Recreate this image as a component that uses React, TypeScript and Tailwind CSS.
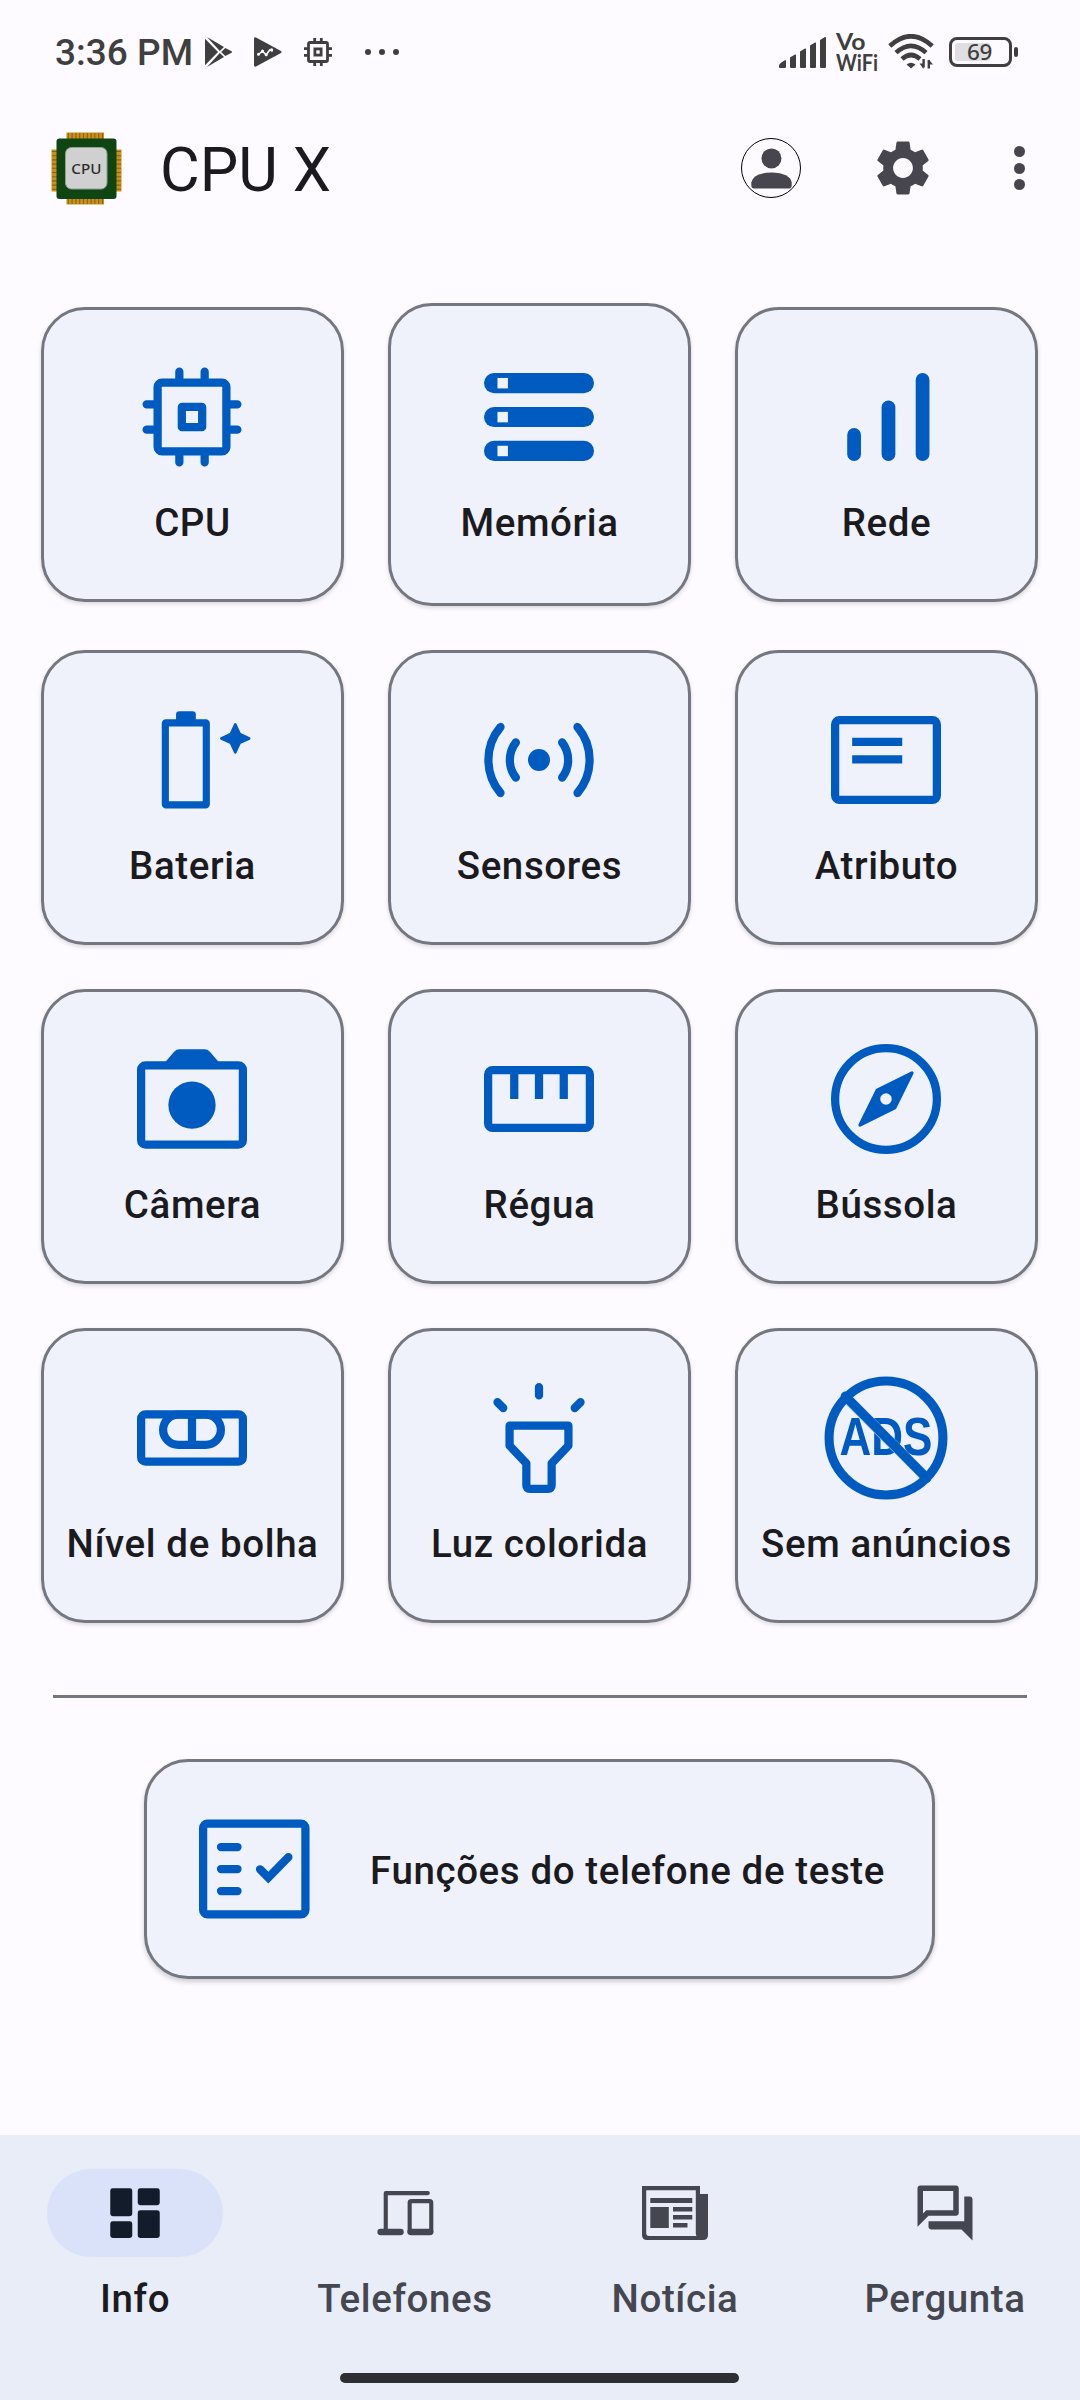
import type { ReactNode } from "react";
import { MdOutlineForum, MdSettings } from "react-icons/md";

function TileIcon({ children }: { children: ReactNode }) {
  return (
    <svg
      viewBox="0 0 24 24"
      className="size-[132px] shrink-0 overflow-visible text-[#005bc0]"
      fill="none"
      stroke="currentColor"
      strokeWidth={1.5}
      strokeLinecap="round"
      strokeLinejoin="round"
    >
      {children}
    </svg>
  );
}

const CpuIcon = () => (
  <TileIcon>
    <rect x="5.75" y="5.75" width="12.5" height="12.5" rx="0.8" />
    <rect x="10.15" y="10.15" width="3.7" height="3.7" rx="0.05" />
    <path d="M9.7 5V3.75M14.3 5V3.75M9.7 19v1.25M14.3 19v1.25M5 9.7H3.75M5 14.3H3.75M19 9.7h1.25M19 14.3h1.25" />
  </TileIcon>
);

const StorageIcon = () => (
  <TileIcon>
    {[4, 10.17, 16.33].map((y) => (
      <g key={y} stroke="none">
        <rect x="2" y={y} width="20" height="3.67" rx="1.83" fill="currentColor" />
        <rect x="4.45" y={y + 0.9} width="1.9" height="1.9" fill="#eff2fb" />
      </g>
    ))}
  </TileIcon>
);

const NetworkIcon = () => (
  <TileIcon>
    <g fill="currentColor" stroke="none">
      <rect x="4.95" y="14" width="2.5" height="6" rx="1.25" />
      <rect x="11.2" y="9" width="2.5" height="11" rx="1.25" />
      <rect x="17.4" y="4" width="2.5" height="16" rx="1.25" />
    </g>
  </TileIcon>
);

const BatteryIcon = () => (
  <TileIcon>
    <rect x="7.15" y="5.25" width="7.45" height="14.9" rx="0.1" strokeWidth={1.3} />
    <path d="M9.1 5V3.75q0-.6.6-.6h2.4q.6 0 .6.6V5z" fill="currentColor" stroke="none" />
    <path
      d="M19.87 5.55l.8 1.72 1.72.8-1.72.8-.8 1.72-.8-1.72-1.72-.8 1.72-.8z"
      fill="currentColor"
      strokeWidth={0.5}
    />
  </TileIcon>
);

const SensorsIcon = () => (
  <TileIcon>
    <circle cx="12" cy="12" r="2" fill="currentColor" stroke="none" />
    <path d="M5 6a9.28 9.28 0 0 0 0 12M7.8 8.8a5.2 5.2 0 0 0 0 6.4M19 6a9.28 9.28 0 0 1 0 12M16.2 8.8a5.2 5.2 0 0 1 0 6.4" />
  </TileIcon>
);

const AttributeIcon = () => (
  <TileIcon>
    <rect x="2.75" y="4.75" width="18.5" height="14.5" rx="0.8" />
    <path d="M5.85 8.7h9.1M5.85 11.9h9.1" strokeLinecap="butt" />
  </TileIcon>
);

const CameraIcon = () => (
  <TileIcon>
    <rect x="2.75" y="5.9" width="18.5" height="14.4" rx="0.8" />
    <path d="M7.15 5.25l1.6-1.85q.4-.45 1-.45h4.5q.6 0 1 .45l1.6 1.85z" fill="currentColor" stroke="none" />
    <circle cx="12" cy="13.1" r="4.3" fill="currentColor" stroke="none" />
  </TileIcon>
);

const RulerIcon = () => (
  <TileIcon>
    <rect x="2.75" y="6.75" width="18.5" height="10.5" rx="0.8" />
    <path d="M7.5 7v5M12 7v5M16.5 7v5" strokeLinecap="butt" />
  </TileIcon>
);

const CompassIcon = () => (
  <TileIcon>
    <circle cx="12" cy="12" r="9.25" />
    <path d="M16.72 7.28L13.6 13.6 7.28 16.72 10.4 10.4z" fill="currentColor" strokeWidth={0.6} />
    <circle cx="12" cy="12" r="1.05" fill="#eff2fb" stroke="none" />
  </TileIcon>
);

const BubbleLevelIcon = () => (
  <TileIcon>
    <rect x="2.75" y="7.7" width="18.5" height="8.6" rx="0.8" />
    <rect x="6.75" y="7.75" width="10.5" height="5.5" rx="2.75" />
    <path d="M12 8v5" strokeLinecap="butt" />
  </TileIcon>
);

const FlashlightIcon = () => (
  <TileIcon>
    <path d="M12 2.75v1.5M4.45 5.5l1.05 1.05M19.55 5.5L18.5 6.55M6.65 9.75h10.7v3.65L14.3 16.6v4Q14.3 21.25 13.65 21.25H10.35Q9.7 21.25 9.7 20.6V16.6L6.65 13.4z" />
  </TileIcon>
);

const NoAdsIcon = () => (
  <TileIcon>
    <text
      x="3.55"
      y="15.05"
      fill="currentColor"
      stroke="none"
      fontFamily="Liberation Sans"
      fontWeight="700"
      fontSize="9.9"
      textLength="16.9"
      lengthAdjust="spacingAndGlyphs"
    >
      ADS
    </text>
    <path d="M5 4.9l14.2 14.2" stroke="#a9c8ee" strokeWidth={1.85} strokeLinecap="butt" />
    <path d="M4.6 4.4l14.8 14.9" strokeWidth={1.7} />
    <circle cx="12" cy="12" r="10.35" strokeWidth={1.65} />
  </TileIcon>
);

const ChecklistIcon = () => (
  <TileIcon>
    <rect x="2.75" y="3.75" width="18.6" height="16.5" rx="0.8" />
    <path d="M6 8h3M6 12h3M6 16h3" />
    <path d="M13.1 12.05l1.5 1.5 3.65-3.7" strokeLinejoin="miter" />
  </TileIcon>
);

const tiles: { label: string; icon: ReactNode; tall?: boolean }[] = [
  { label: "CPU", icon: <CpuIcon /> },
  { label: "Memória", icon: <StorageIcon />, tall: true },
  { label: "Rede", icon: <NetworkIcon /> },
  { label: "Bateria", icon: <BatteryIcon /> },
  { label: "Sensores", icon: <SensorsIcon /> },
  { label: "Atributo", icon: <AttributeIcon /> },
  { label: "Câmera", icon: <CameraIcon /> },
  { label: "Régua", icon: <RulerIcon /> },
  { label: "Bússola", icon: <CompassIcon /> },
  { label: "Nível de bolha", icon: <BubbleLevelIcon /> },
  { label: "Luz colorida", icon: <FlashlightIcon /> },
  { label: "Sem anúncios", icon: <NoAdsIcon /> },
];

function Tile({ label, icon, tall }: { label: string; icon: ReactNode; tall?: boolean }) {
  return (
    <button
      className={`flex flex-col items-center gap-3 rounded-[44px] border-3 border-[#747780] bg-[#eff2fb] pr-px shadow-[0_2px_4px_rgba(0,0,0,0.14)] ${
        tall ? "h-[303px] pt-[45px]" : "h-[295px] pt-[41px]"
      }`}
    >
      {icon}
      <span className="pl-px text-[38.5px] leading-[55px] font-medium tracking-[0.6px] whitespace-nowrap">{label}</span>
    </button>
  );
}

function StatusBar() {
  return (
    <div className="flex h-[104px] items-center text-[#3f3f3f]">
      <span className="ml-[55px] w-[150px] pt-0.5 text-[37px] leading-[44px] font-medium whitespace-nowrap">3:36 PM</span>
      <svg width="28" height="30" viewBox="0 0 28 30" fill="currentColor">
        <path d="M0 1.8L13 15 0 28.2zM2 0L19 10l-4.2 4zM14.8 16L19 20 2 30zM20.3 11L26.6 14.2q1 .8 0 1.6L20.3 19 16.2 15z" />
      </svg>
      <svg width="28" height="30" viewBox="0 0 28 30" className="ml-[21px]">
        <path d="M0 1.4Q.2-.3 2 .6L27 14q1 1 0 2L2 29.4Q.2 30.3 0 28.6z" fill="currentColor" />
        <path d="M4.5 17.5l4-3.5 3.6 4 3.6-5 3.2 1" fill="none" stroke="#fdfbff" strokeWidth="1.6" />
        <g fill="#fdfbff">
          <circle cx="4.5" cy="17.3" r="1.5" />
          <circle cx="8.5" cy="14" r="1.5" />
          <circle cx="12.2" cy="17.8" r="1.5" />
          <circle cx="17.6" cy="12.8" r="1.6" />
        </g>
      </svg>
      <svg width="28" height="28" viewBox="0 0 28 28" fill="none" stroke="currentColor" strokeWidth="2.8" className="ml-[22px]">
        <rect x="4.5" y="4.5" width="19" height="19" rx="1.5" />
        <rect x="10.9" y="10.9" width="6.2" height="6.2" />
        <path d="M10.7 4V0M17.3 4V0M10.7 24v4M17.3 24v4M4 10.7H0M4 17.3H0M24 10.7h4M24 17.3h4" />
      </svg>
      <span className="ml-[33px] flex gap-2">
        <i className="size-1.5 rounded-full bg-current" />
        <i className="size-1.5 rounded-full bg-current" />
        <i className="size-1.5 rounded-full bg-current" />
      </span>
      <svg width="48" height="31" viewBox="0 0 48 31" fill="currentColor" className="ml-auto">
        <path d="M0 28.5q0-2 6-5.2h1V30q0 1-1 1H1q-1 0-1-1zM11 20.5l5-2.9q1-.3 1 .6V30q0 1-1 1h-4q-1 0-1-1zM21 14.5l5-2.9q1-.3 1 .6V30q0 1-1 1h-4q-1 0-1-1zM31 8.5l5-2.9q1-.3 1 .6V30q0 1-1 1h-4q-1 0-1-1zM41 3l5-2.9q1-.3 1 .6V30q0 1-1 1h-4q-1 0-1-1z" />
      </svg>
      <svg
        width="43"
        height="44"
        viewBox="0 0 43 44"
        fill="currentColor"
        fontFamily="Lato"
        fontSize="22.5"
        fontWeight="700"
        className="ml-[9px] overflow-visible"
      >
        <text>
          <tspan x="0" y="20" textLength="29.5" lengthAdjust="spacingAndGlyphs">
            Vo
          </tspan>
          <tspan x="0" y="41" textLength="42" lengthAdjust="spacingAndGlyphs">
            WiFi
          </tspan>
        </text>
      </svg>
      <svg width="46" height="36" viewBox="0 0 46 36" fill="none" stroke="currentColor" strokeWidth="4.6" className="ml-[9px]">
        <path d="M1.8 12Q23-7.5 44.2 12M8 18.6q15-13.6 30 0M14 25q9-8 18 0" />
        <path d="M18.5 30.5q4.5-3.6 9 0L23 34.5z" fill="currentColor" stroke="none" />
        <path d="M35.6 25v8.5M40.8 34.5V26" strokeWidth="2.4" />
        <path d="M31.5 29.5h4V35zM40.8 25.5v5H45z" fill="currentColor" stroke="none" />
      </svg>
      <span className="ml-[15px] flex h-[30px] w-[63px] items-center rounded-[8px] border-3 border-current p-[3px]">
        <span className="relative flex h-[18px] w-full items-center justify-center">
          <i className="absolute inset-y-0 left-0 w-[69%] rounded-[3px] bg-[#dfdee3]" />
          <b className="relative mr-0.5 font-['Noto_Sans'] text-[22.5px] leading-[18px] font-medium -tracking-[0.3px]">69</b>
        </span>
      </span>
      <i className="mr-[62px] ml-[2px] h-2.5 w-1 rounded-[2px] bg-current" />
    </div>
  );
}

const pins = [0, 1, 2, 3, 4, 5, 6, 7, 8, 9];

function AppLogo() {
  return (
    <svg width="71" height="73" viewBox="0 0 71 73">
      <g fill="#c8901c">
        <rect x="15.5" y="0.5" width="37.5" height="72" />
        <rect x="0.5" y="17.5" width="70" height="42" />
      </g>
      <g stroke="#8a6216" strokeWidth="1.1">
        {pins.map((p) => (
          <path key={p} d={`M${17.3 + p * 3.8} 1V72M1 ${19.5 + p * 4.2}H70`} />
        ))}
      </g>
      <rect x="5.5" y="6.5" width="60" height="60.5" rx="3" fill="#0f4513" />
      <rect x="14.5" y="15.5" width="41.5" height="41.5" rx="6" fill="#d0d0d0" stroke="#8fa191" strokeWidth="1" />
      <text x="35.3" y="41.5" textAnchor="middle" fontFamily="Noto Sans" fontSize="15.2" fontWeight="500" fill="#2c2c2c">
        CPU
      </text>
    </svg>
  );
}

function AppBar() {
  return (
    <header className="flex h-[128px] items-center pl-[51px]">
      <AppLogo />
      <h1 className="ml-[38px] pt-1 text-[61px] leading-[77px] font-normal">CPU X</h1>
      <span className="ml-auto flex size-[60px] items-center justify-center rounded-full border border-black">
        <svg width="41" height="41" viewBox="0 0 41 41" fill="#47464f">
          <circle cx="20.5" cy="10.4" r="10" />
          <path d="M.3 34.5Q2 25 20.5 24.5Q39 25 40.7 34.5V37.5Q40.5 40.5 38 40.5H3Q.5 40.5 .3 37.5z" />
        </svg>
      </span>
      <MdSettings className="ml-[69px] size-[66px] text-[#47464f]" />
      <span className="mr-[55.5px] ml-[77.5px] flex flex-col gap-[5.5px]">
        <i className="size-[11px] rounded-full bg-[#47464f]" />
        <i className="size-[11px] rounded-full bg-[#47464f]" />
        <i className="size-[11px] rounded-full bg-[#47464f]" />
      </span>
    </header>
  );
}

const DashboardIcon = () => (
  <svg viewBox="0 0 24 24" className="size-[66px]" fill="currentColor">
    <rect x="3" y="3" width="8" height="10.2" rx="0.9" />
    <rect x="3" y="15" width="8" height="6.1" rx="0.9" />
    <rect x="13" y="3" width="8" height="6.2" rx="0.9" />
    <rect x="13" y="11" width="8" height="10.1" rx="0.9" />
  </svg>
);

const DevicesIcon = () => (
  <svg
    viewBox="0 0 24 24"
    className="size-[66px]"
    fill="none"
    stroke="currentColor"
    strokeWidth={1.5}
    strokeLinecap="round"
    strokeLinejoin="round"
  >
    <path d="M20.3 4.75H5V18" />
    <path d="M3.1 18.9h7.3" strokeWidth={2.3} />
    <rect x="13.7" y="7.7" width="7.85" height="11.6" rx="0.6" />
    <path d="M14 18.85h7.2" strokeWidth={2.3} />
  </svg>
);

const NewspaperIcon = () => (
  <svg viewBox="0 0 66 54" className="h-[54px] w-[66px]" fill="currentColor">
    <path
      fillRule="evenodd"
      d="M0 0h58v8h8v41q0 5-5 5H5q-5 0-5-5zM4.2 4.2V47q0 3 3 3H54.5q-.7-1-.7-3V4.2z"
    />
    <path d="M8.3 12h42v5h-42zM8.3 21h18.5v21H8.3zM31 21h19.3v4.4H31zM31 29h19.3v4.4H31zM31 37h14.5v4.5H31z" />
  </svg>
);

const navItems = [
  { label: "Info", icon: <DashboardIcon />, active: true },
  { label: "Telefones", icon: <DevicesIcon /> },
  { label: "Notícia", icon: <NewspaperIcon /> },
  { label: "Pergunta", icon: <MdOutlineForum className="size-[66px]" /> },
];

function BottomNav() {
  return (
    <nav className="flex h-[265px] flex-col items-center bg-[#e8edf8] pt-[34px]">
      <div className="grid w-full grid-cols-4">
        {navItems.map((item) => (
          <div
            key={item.label}
            className={`flex flex-col items-center gap-[14px] ${item.active ? "text-[#1b1b1f]" : "text-[#44474f]"}`}
          >
            <span
              className={`flex h-[88px] w-[176px] items-center justify-center rounded-full ${
                item.active ? "bg-[#dae2f9] text-[#131c2b]" : ""
              }`}
            >
              {item.icon}
            </span>
            <span className="text-[38.5px] leading-[55px] font-medium tracking-[0.6px]">{item.label}</span>
          </div>
        ))}
      </div>
      <div className="mt-[47px] mr-px h-2.5 w-[399px] rounded-full bg-[#2e2f33]" />
    </nav>
  );
}

export default function App() {
  return (
    <div className="flex h-[2400px] w-[1080px] flex-col overflow-hidden bg-[#fdfbff] font-[Roboto,sans-serif] text-[#1b1b1f]">
      <StatusBar />
      <AppBar />
      <main className="flex flex-1 flex-col items-center pt-[71px]">
        <div className="-ml-px grid w-[997px] grid-cols-3 items-center gap-11">
          {tiles.map((tile) => (
            <Tile key={tile.label} {...tile} />
          ))}
        </div>
        <div className="mt-[72px] h-[3px] w-[974px] bg-[#747780]" />
        <button className="mt-[61px] mr-px flex h-[220px] w-[791px] items-center rounded-[44px] border-3 border-[#747780] bg-[#eff2fb] pl-[41px] shadow-[0_3px_5px_rgba(0,0,0,0.18)]">
          <ChecklistIcon />
          <span className="ml-[50px] pt-0.5 text-[38.5px] leading-[55px] font-medium tracking-[0.6px] whitespace-nowrap">
            Funções do telefone de teste
          </span>
        </button>
      </main>
      <BottomNav />
    </div>
  );
}
